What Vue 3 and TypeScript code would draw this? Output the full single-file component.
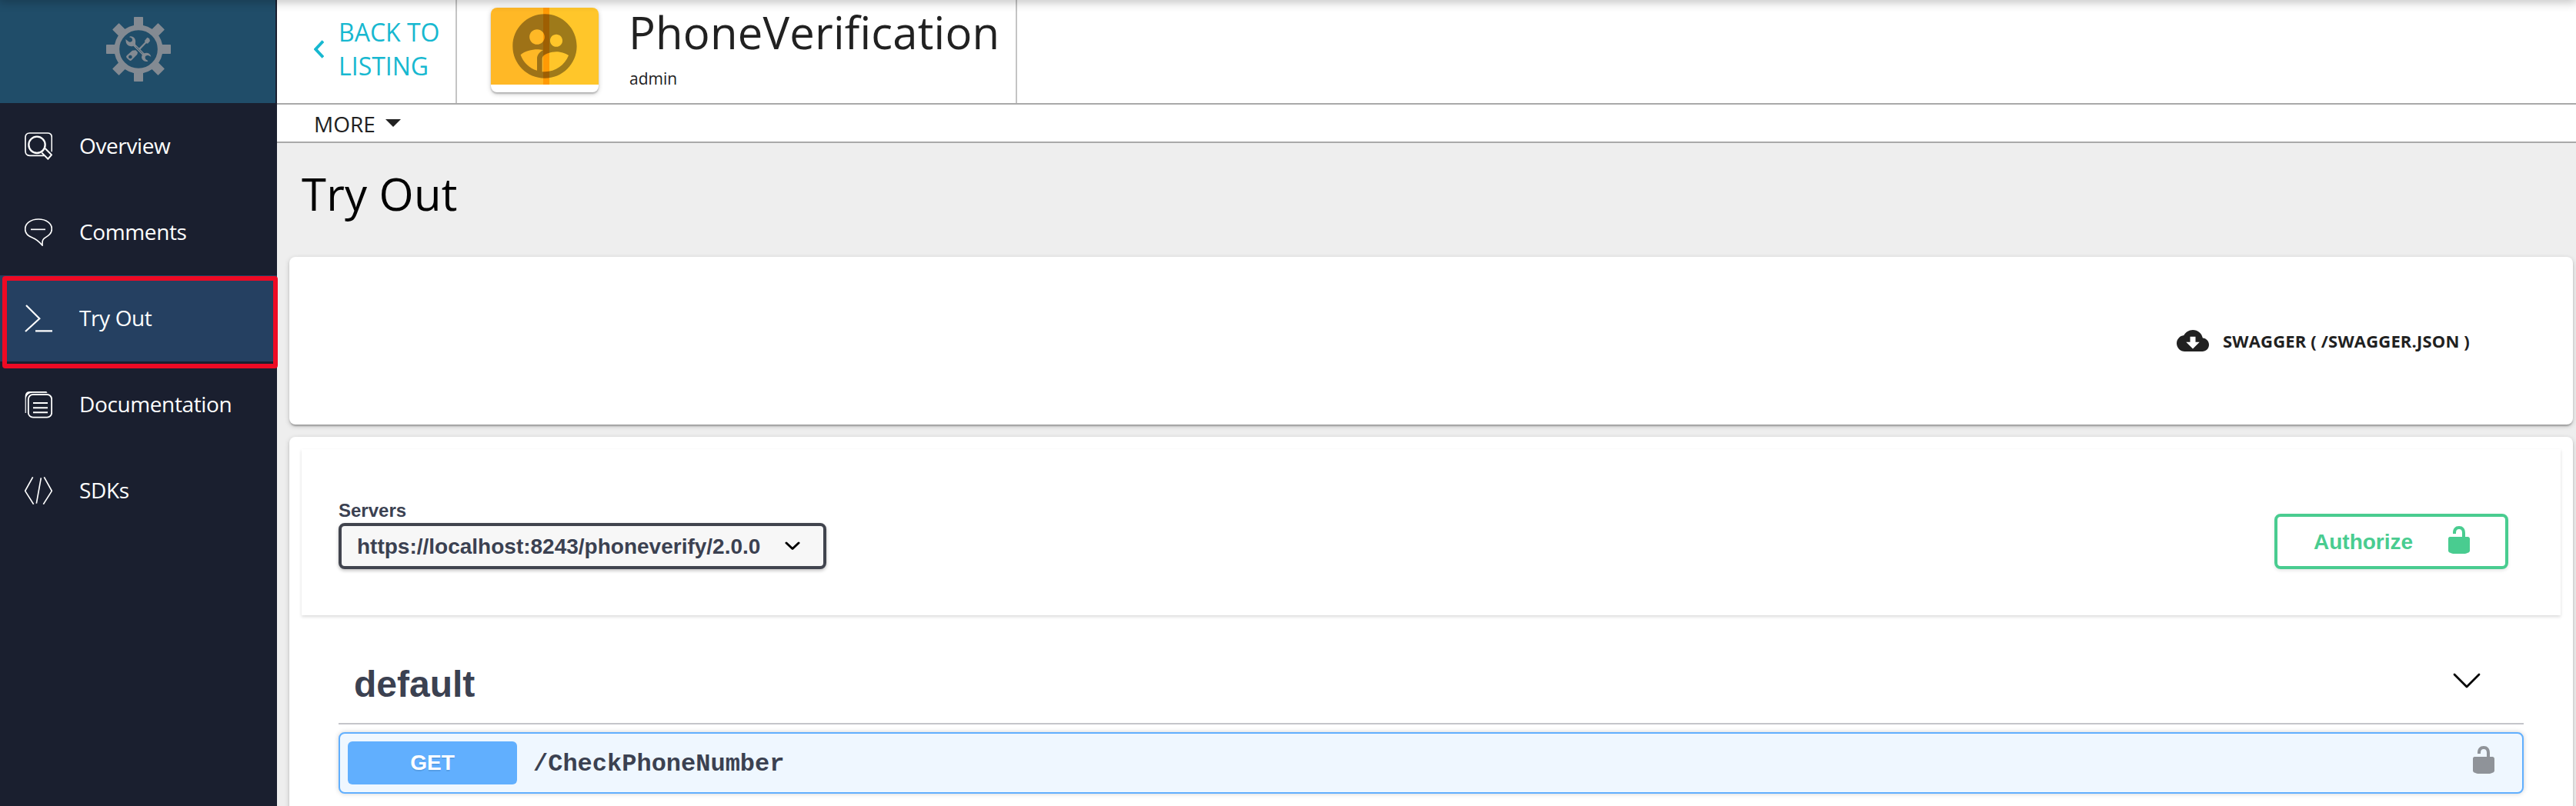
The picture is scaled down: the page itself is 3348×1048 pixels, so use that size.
<script setup lang="ts">
interface NavItem {
  id: string
  label: string
  active?: boolean
}

const navItems: NavItem[] = [
  { id: 'overview', label: 'Overview' },
  { id: 'comments', label: 'Comments' },
  { id: 'tryout', label: 'Try Out', active: true },
  { id: 'docs', label: 'Documentation' },
  { id: 'sdks', label: 'SDKs' },
]

const gearAngles: number[] = [0, 45, 90, 135, 180, 225, 270, 315]
const server = 'https://localhost:8243/phoneverify/2.0.0'
const lockPath =
  'M15.8 8H14V5.6C14 2.703 12.665 1 10 1 7.334 1 6 2.703 6 5.6V6h2v-.801C8 3.754 8.797 3 10 3c1.203 0 2 .754 2 2.199V8H4c-.553 0-1 .646-1 1.199V17c0 .549.428 1.139.951 1.307l1.197.387C5.672 18.861 6.55 19 7.1 19h5.8c.549 0 1.428-.139 1.951-.307l1.196-.387c.524-.167.953-.757.953-1.306V9.199C17 8.646 16.352 8 15.8 8z'
</script>

<template>
  <div class="app">
    <aside class="sidebar">
      <div class="brand">
        <svg class="gear" viewBox="414 66 252 252">
          <g fill="#838a92">
            <rect v-for="a in gearAngles" :key="a" x="522" y="66" width="36" height="38" rx="2" :transform="`rotate(${a} 540 192)`" />
          </g>
          <circle cx="540" cy="192" r="84.5" fill="none" stroke="#838a92" stroke-width="20" />
          <!-- screwdriver -->
          <path d="M582 150l-8-4-10 13 1 5-24 25 5 5 24-25 6 1 9-10z" fill="#838a92" />
          <path fill-rule="evenodd" d="M529 196l8 8-2 8-22 23q-4 4-9 0l-10-9q-4-4 0-9l22-20zM508 215a7 7 0 1 0 .1 0z" fill="#838a92" />
          <!-- wrench -->
          <path d="M507 142c14-2 24 10 21 25v6l34 35c12-5 24 0 27 13l-11-5c-7-1-12 2-12 8s3 9 8 11l3 4c-12 4-24-4-25-16l2-9-34-35c-13 5-27-2-29-16l-1-10 12 10c5 3 14 0 14-7 0-6-4-9-12-11z" fill="#838a92" />
          <path d="M530 182l26 27M524 187l27 27" stroke="#204d69" stroke-width="2.2" />
        </svg>
      </div>
      <nav>
        <div v-for="item in navItems" :key="item.id" class="nav-item" :class="{ active: item.active }">
          <svg v-if="item.id === 'overview'" class="nav-icon" viewBox="96 516 108 108">
            <path d="M202 592V536q0-17-17-17H116q-17 0-17 17v53q0 18 17 18h56" stroke-width="5" />
            <circle cx="144" cy="565" r="32" stroke-width="7" />
            <path d="M176 579l25 25-14 16-24-24" stroke-width="6" />
          </svg>
          <svg v-else-if="item.id === 'comments'" class="nav-icon" viewBox="96 132 108 108">
            <path d="M150 135c-30 0-52 16-52 39 0 17 12 27 28 33 14 5 25 14 39 30 0-16 0-20 7-27 15-10 30-18 30-37 0-22-22-38-52-38z" stroke-width="5" />
            <path d="M120 175h57" stroke-width="5" />
          </svg>
          <svg v-else-if="item.id === 'tryout'" class="nav-icon" viewBox="96 468 108 108">
            <path d="M102 471l52 52-55 50M138 571h66" stroke-width="6.500" />
          </svg>
          <svg v-else-if="item.id === 'docs'" class="nav-icon" viewBox="96 114 108 108">
            <rect x="110.500" y="129" width="91" height="89" rx="18" stroke-width="5.500" />
            <path d="M98 201v-67q1-17 18-17h65l4 6h-60q-20 2-22 20v58z" fill="#fff" stroke="none" />
            <path d="M103 201v-57q3-18 22-20h60" stroke="#1a1f2f" stroke-width="3" />
            <path d="M129 162h57M129 181h57M129 199h57" stroke-width="6" />
          </svg>
          <svg v-else class="nav-icon" viewBox="96 450 108 108">
            <path d="M128 451l-30 54 33 52M172 451l30 54-33 52M160 454l-18 100" stroke-width="5" />
          </svg>
          <span>{{ item.label }}</span>
          <div v-if="item.active" class="marker"></div>
        </div>
      </nav>
    </aside>

    <main class="main">
      <header class="topbar">
        <a class="back">
          <svg viewBox="0 0 13 24"><path d="M12 1.500L2.200 12 12 22.500" fill="none" stroke="#17b8d0" stroke-width="4" /></svg>
          <span>BACK TO<br />LISTING</span>
        </a>
        <div class="api">
          <div class="thumb">
            <div class="thumb-art">
              <svg viewBox="0 0 24 24">
                <path fill-rule="evenodd" d="M11.990 2c-5.520 0-10 4.480-10 10s4.480 10 10 10 10-4.480 10-10-4.480-10-10-10zm3.610 6.340c1.070 0 1.930.86 1.930 1.930 0 1.070-.86 1.930-1.930 1.930-1.070 0-1.930-.86-1.930-1.930-.01-1.070.86-1.930 1.930-1.930zm-6-1.580c1.300 0 2.360 1.060 2.360 2.360 0 1.300-1.060 2.360-2.360 2.360s-2.360-1.060-2.360-2.360c0-1.310 1.050-2.360 2.360-2.360zm0 9.130v3.750c-2.400-.75-4.300-2.600-5.140-4.960 1.050-1.120 3.670-1.690 5.140-1.690.53 0 1.200.08 1.900.22-1.640.87-1.900 2.020-1.900 2.680zM11.990 20c-.27 0-.53-.01-.79-.04v-4.070c0-1.420 2.940-2.130 4.400-2.130 1.070 0 2.920.39 3.840 1.150-1.170 2.970-4.060 5.090-7.450 5.090z" />
              </svg>
            </div>
          </div>
          <div class="api-text">
            <div class="api-name">PhoneVerification</div>
            <div class="api-owner">admin</div>
          </div>
        </div>
      </header>
      <div class="morebar">
        <span>MORE</span>
        <svg viewBox="0 0 20 10"><path d="M0 0h20L10 10z" fill="#212121" /></svg>
      </div>

      <h1 class="page-title">Try Out</h1>

      <section class="card download">
        <svg viewBox="0 0 24 24"><path fill="#212121" d="M19.350 10.040C18.670 6.590 15.640 4 12 4 9.110 4 6.600 5.640 5.350 8.040 2.340 8.360 0 10.910 0 14c0 3.310 2.690 6 6 6h13c2.760 0 5-2.240 5-5 0-2.640-2.050-4.780-4.650-4.960zM17 13l-5 5-5-5h3V9h4v4h3z" /></svg>
        <span>SWAGGER ( /SWAGGER.JSON )</span>
      </section>

      <section class="card swagger">
        <div class="scheme">
          <div class="servers">
            <label>Servers</label>
            <div class="select">
              <span>{{ server }}</span>
              <svg viewBox="0 0 20 12"><path d="M2 2l8 7.500L18 2" fill="none" stroke="#000" stroke-width="3" stroke-linecap="round" stroke-linejoin="round" /></svg>
            </div>
          </div>
          <button class="authorize">
            <span>Authorize</span>
            <svg viewBox="0 0 20 20"><path :d="lockPath" fill="#49cc90" /></svg>
          </button>
        </div>

        <div class="ops">
          <div class="tag">
            <h3>default</h3>
            <svg viewBox="0 0 36 20"><path d="M2 2l16 16L34 2" fill="none" stroke="#000" stroke-width="2.800" stroke-linecap="round" stroke-linejoin="round" /></svg>
          </div>
          <div class="opblock">
            <span class="method">GET</span>
            <span class="path">/CheckPhoneNumber</span>
            <svg viewBox="0 0 20 20"><path :d="lockPath" fill="#8f9399" /></svg>
          </div>
        </div>
      </section>
    </main>
    <div class="top-shadow"></div>
  </div>
</template>

<style>
html,
body {
  margin: 0;
  overflow: hidden;
}
</style>

<style scoped>
* {
  box-sizing: border-box;
}
.app {
  position: relative;
  display: flex;
  width: 3348px;
  height: 1048px;
  overflow: hidden;
  background: #eee;
  font-family: 'Open Sans', sans-serif;
  color: #212121;
}
.top-shadow {
  position: absolute;
  left: 0;
  right: 0;
  top: -10px;
  height: 10px;
  box-shadow: 0 0 14px 2px rgba(0, 0, 0, 0.28);
}
.sidebar {
  flex: none;
  width: 360px;
  background: #1a1f2f;
}
.brand {
  width: 358px;
  height: 134px;
  padding: 22px 0 0 138px;
  background: #204d69;
}
.gear {
  display: block;
  width: 84px;
  height: 84px;
}
.nav-item {
  position: relative;
  display: flex;
  align-items: center;
  height: 112px;
  padding-left: 32px;
  gap: 35px;
  font-size: 28px;
  line-height: 40px;
  letter-spacing: -0.38px;
  color: #fff;
}
.nav-item span {
  padding-bottom: 2px;
}
.nav-item.active {
  background: #254061;
}
.nav-icon {
  width: 36px;
  height: 36px;
  fill: none;
  stroke: #fff;
}
.marker {
  position: absolute;
  left: 3px;
  top: 1px;
  width: 358px;
  height: 120px;
  border: 6px solid #ee0a24;
  border-radius: 4px;
  background: linear-gradient(transparent 105px, #1a1f2f 105px);
  z-index: 2;
}
.main {
  flex: 1;
  min-width: 0;
  display: flex;
  flex-direction: column;
}
.topbar {
  display: flex;
  height: 136px;
  flex: none;
  background: #fff;
  border-bottom: 2px solid #a9a9a9;
}
.back {
  display: flex;
  width: 234px;
  border-right: 2px solid #c4c4c4;
  padding: 20px 0 0 48px;
  color: #17b8d0;
  font-size: 32px;
  line-height: 44px;
}
.back svg {
  width: 13px;
  height: 24px;
  margin: 32px 19px 0 0;
}
.back span {
  white-space: nowrap;
}
.api {
  display: flex;
  width: 728px;
  border-right: 2px solid #c4c4c4;
  padding-left: 44px;
}
.thumb {
  flex: none;
  width: 140px;
  height: 110px;
  margin-top: 10px;
  border-radius: 8px;
  overflow: hidden;
  background: #fff;
  box-shadow: 0 2px 6px rgba(0, 0, 0, 0.2), 0 2px 2px rgba(0, 0, 0, 0.2);
}
.thumb-art {
  height: 100px;
  padding-left: 20px;
  background: linear-gradient(90deg, #ffb826 68px, #ff9a05 68px 76px, #ffc62a 76px);
}
.thumb-art svg {
  display: block;
  width: 100px;
  height: 100px;
  fill: rgba(0, 0, 0, 0.38);
}
.api-text {
  margin-left: 39px;
  white-space: nowrap;
}
.api-name {
  height: 80px;
  margin-top: 2px;
  font-size: 58px;
  line-height: 80px;
  letter-spacing: 0.2px;
}
.api-owner {
  margin-top: 5px;
  padding-left: 1px;
  font-size: 21px;
  line-height: 30px;
}
.morebar {
  display: flex;
  flex: none;
  align-items: center;
  height: 50px;
  padding-left: 48px;
  background: #fff;
  border-bottom: 2px solid #a9a9a9;
  font-size: 28px;
  line-height: 40px;
}
.morebar span {
  padding-top: 2px;
}
.morebar svg {
  width: 20px;
  height: 10px;
  margin-left: 13px;
}
.page-title {
  flex: none;
  height: 148px;
  margin: 0;
  padding: 26px 0 0 32px;
  font-weight: 400;
  font-size: 58px;
  line-height: 80px;
  letter-spacing: 0.2px;
  color: #000;
}
.card {
  flex: none;
  margin: 0 4px 0 16px;
  border-radius: 8px;
  background: #fff;
  box-shadow: 0 2px 6px rgba(0, 0, 0, 0.2), 0 2px 2px rgba(0, 0, 0, 0.14), 0 4px 2px -2px rgba(0, 0, 0, 0.12);
}
.download {
  display: flex;
  align-items: center;
  justify-content: flex-end;
  height: 218px;
  padding-right: 134px;
  font-size: 22px;
  font-weight: 700;
  letter-spacing: 0.17px;
}
.download svg {
  width: 42px;
  height: 42px;
  margin-right: 18px;
}
.swagger {
  height: 520px;
  margin-top: 16px;
  padding: 16px;
  color: #3b4151;
  font-family: 'Liberation Sans', sans-serif;
}
.scheme {
  display: flex;
  justify-content: space-between;
  height: 216px;
  padding: 66px 68px 0 48px;
  box-shadow: 0 2px 4px rgba(0, 0, 0, 0.15);
}
.servers label {
  display: block;
  margin-bottom: 2px;
  font-size: 24px;
  font-weight: 700;
  line-height: 28px;
}
.select {
  display: flex;
  align-items: center;
  justify-content: space-between;
  width: 634px;
  height: 60px;
  padding: 0 30px 0 20px;
  border: 4px solid #41444e;
  border-radius: 8px;
  background: #f7f7f7;
  box-shadow: 0 2px 4px rgba(0, 0, 0, 0.25);
  font-size: 28px;
  font-weight: 700;
}
.select span,
.authorize span {
  padding-top: 2px;
}
.select svg {
  width: 20px;
  height: 12px;
}
.authorize {
  display: flex;
  align-items: center;
  width: 304px;
  height: 72px;
  margin: 18px 0 0;
  padding: 0 40px 0 47px;
  justify-content: space-between;
  border: 4px solid #49cc90;
  border-radius: 8px;
  background: transparent;
  box-shadow: 0 2px 4px rgba(0, 0, 0, 0.1);
  color: #49cc90;
  font: 700 28px 'Liberation Sans', sans-serif;
}
.authorize svg {
  width: 40px;
  height: 40px;
  margin-top: -4px;
}
.ops {
  margin: 0 48px;
}
.tag {
  display: flex;
  justify-content: space-between;
  height: 142px;
  padding: 62px 56px 0 20px;
  border-bottom: 2px solid #c4c5ca;
}
.tag h3 {
  margin: 0;
  font-size: 48px;
  line-height: 56px;
}
.tag svg {
  width: 36px;
  height: 20px;
  margin-top: 13px;
}
.opblock {
  display: flex;
  align-items: center;
  height: 80px;
  margin-top: 10px;
  padding: 0 30px 0 10px;
  border: 2px solid #61affe;
  border-radius: 8px;
  background: #eff7ff;
  box-shadow: 0 0 6px rgba(0, 0, 0, 0.19);
}
.method {
  width: 220px;
  height: 56px;
  border-radius: 6px;
  background: #61affe;
  color: #fff;
  font-size: 28px;
  font-weight: 700;
  line-height: 56px;
  text-align: center;
  text-shadow: 0 2px 0 rgba(0, 0, 0, 0.1);
}
.path {
  flex: 1;
  padding: 2px 0 0 21px;
  font: 700 32px 'Liberation Mono', monospace;
}
.opblock svg {
  width: 40px;
  height: 40px;
  margin-top: -8px;
}
</style>
